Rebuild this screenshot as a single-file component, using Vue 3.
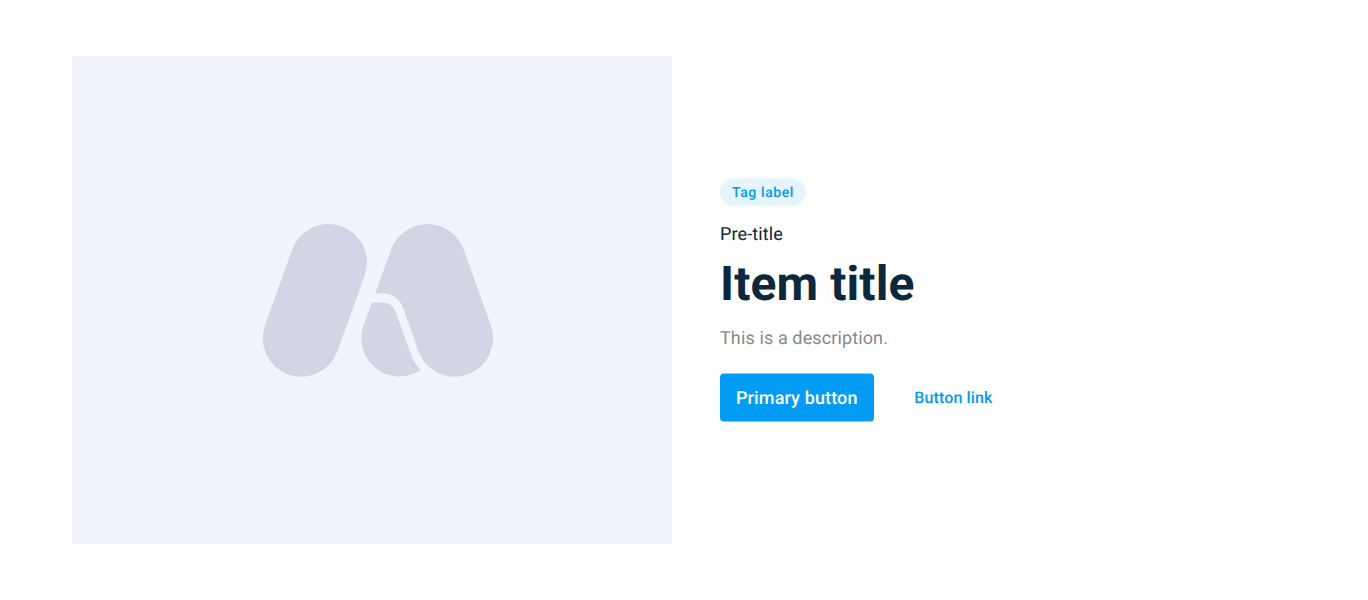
<script setup>
</script>

<template>
  <main class="hero">
    <div class="media">
      <svg class="logo" viewBox="0 0 232 154" aria-hidden="true">
        <path d="M30.300 26.450A38 38 0 0 1 102.700 52.550L75.400 128.250A38 38 0 0 1 3 102.150Z" />
        <path d="M113.200 70.500L129.200 26.450A38.600 38.600 0 0 1 201.700 26.450L228.800 102.150A38 38 0 0 1 156.400 128.250L141.500 86Q136 70.300 119.500 70.300Z" />
        <path d="M110 79.600H119.500Q130 79.500 133.700 89L147.500 127.500Q151 139 158.600 147.300A38.400 38.400 0 0 1 101.600 102.150Z" />
      </svg>
    </div>
    <section class="content">
      <span class="tag">Tag label</span>
      <p class="pre">Pre-title</p>
      <h1 class="title">Item title</h1>
      <p class="desc">This is a description.</p>
      <div class="actions">
        <button class="primary">Primary button</button>
        <a class="link">Button link</a>
      </div>
    </section>
  </main>
</template>

<style>
body { margin: 0; background: #fff; }
</style>

<style scoped>
.hero { display: flex; box-sizing: border-box; height: 600px; padding: 56px 72px; gap: 48px; align-items: center; font-family: Roboto, sans-serif; text-rendering: geometricPrecision; }
.media { width: 600px; height: 488px; background: #f1f4ff; display: flex; align-items: center; justify-content: center; }
.logo { width: 232px; height: 154px; margin-left: 12px; fill: #d2d5e3; }
.content { display: flex; flex-direction: column; align-items: flex-start; color: #0d283c; transform: translateY(-0.4px); }
.tag { box-sizing: border-box; height: 27px; line-height: 27px; padding: 1px 12px 0; border-radius: 14px; background: #e5f4fe; color: #039af0; font-size: 14px; font-weight: 500; letter-spacing: .6px; }
.pre { margin: 16px 0 0; padding-top: 1px; font-size: 18px; line-height: 24px; letter-spacing: .1px; }
.title { margin: 7px 0 0; font-size: 48px; line-height: 60px; font-weight: 700; letter-spacing: .1px; }
.desc { margin: 13px 0 0; font-size: 18px; line-height: 24px; color: #87888c; letter-spacing: .12px; }
.actions { display: flex; align-items: center; gap: 40.6px; margin-top: 23px; }
.primary { height: 48px; padding: 1px 16px 0; border: 0; border-radius: 4px; background: #029cf5; color: #fff; font: 500 18px Roboto, sans-serif; letter-spacing: .13px; text-rendering: inherit; }
.link { color: #039af0; font-size: 16px; font-weight: 500; letter-spacing: .13px; }
</style>
